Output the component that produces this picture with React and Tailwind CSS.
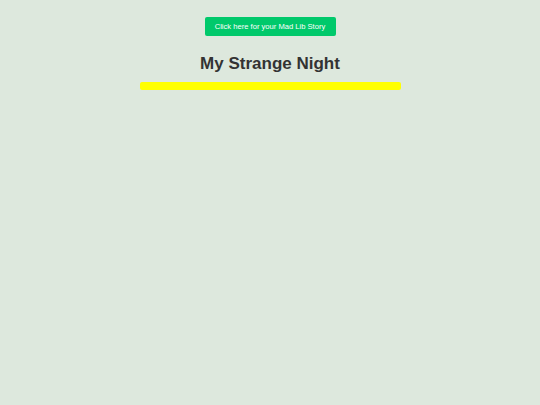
export default function App() {
  return (
    <div className="min-h-[405px] w-full bg-[#dde8dd] flex flex-col items-center pt-[17px]" style={{ fontFamily: '"Liberation Sans", Arial, sans-serif' }}>
      <button className="h-[19px] w-[131px] bg-[#00c96b] text-white text-[7.6px] rounded-[2px] leading-none flex items-center justify-center">
        Click here for your Mad Lib Story
      </button>
      <h1 className="mt-[18px] text-[17px] font-bold text-[#333333] leading-[20px]">My Strange Night</h1>
      <div className="mt-[8px] h-[8px] w-[261px] bg-[#ffff00] rounded-[2px]"></div>
    </div>
  );
}
